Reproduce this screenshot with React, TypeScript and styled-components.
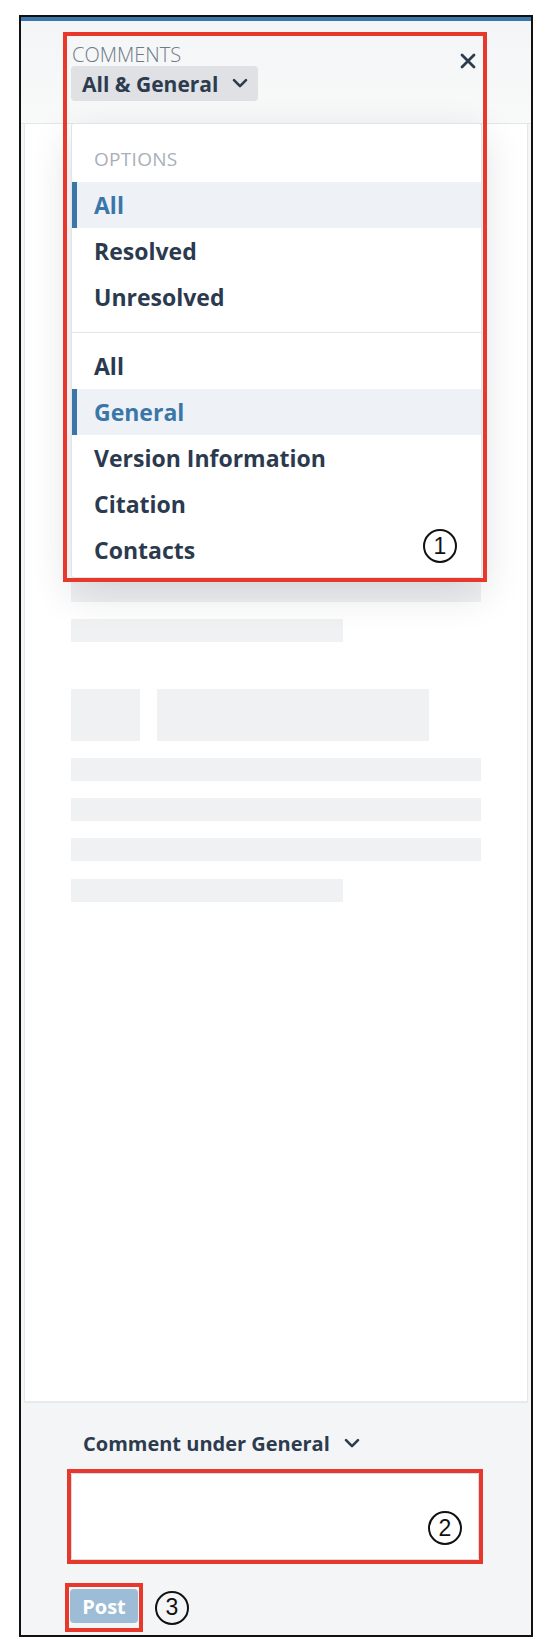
import styled, { createGlobalStyle } from "styled-components";

const GlobalStyle = createGlobalStyle`
  * {
    box-sizing: border-box;
  }

  body {
    margin: 0;
    background: #ffffff;
    font-family: "Open Sans", "Liberation Sans", sans-serif;
  }
`;

const STATUS_OPTIONS = [
  { label: "All", selected: true },
  { label: "Resolved", selected: false },
  { label: "Unresolved", selected: false },
];

const SECTION_OPTIONS = [
  { label: "All", selected: false },
  { label: "General", selected: true },
  { label: "Version Information", selected: false },
  { label: "Citation", selected: false },
  { label: "Contacts", selected: false },
];

const Chevron = ({ size = 16 }: { size?: number }) => (
  <svg width={size} height={size * 0.65} viewBox="0 0 16 10" fill="none">
    <polyline
      points="2,2 8,8 14,2"
      stroke="#2d3b4e"
      strokeWidth="2.6"
      strokeLinecap="round"
      strokeLinejoin="round"
    />
  </svg>
);

const CloseIcon = () => (
  <svg width="16" height="16" viewBox="0 0 16 16" fill="none">
    <path d="M2 2 L14 14 M14 2 L2 14" stroke="#2d3b4e" strokeWidth="2.8" strokeLinecap="round" />
  </svg>
);

const App = () => {
  return (
    <>
      <GlobalStyle />
      <S.Page>
        <S.Frame>
          <S.TopBar />
          <S.Header>
            <S.TitleBox>
              <S.Title>COMMENTS</S.Title>
              <S.FilterPill>
                All &amp; General
                <Chevron />
              </S.FilterPill>
            </S.TitleBox>
            <S.CloseButton aria-label="Close">
              <CloseIcon />
            </S.CloseButton>

            <S.Menu>
              <S.MenuGroup $top={22} $bottom={12}>
                <S.MenuLabel>OPTIONS</S.MenuLabel>
                {STATUS_OPTIONS.map((option) => (
                  <S.MenuItem key={option.label} $selected={option.selected}>
                    {option.label}
                  </S.MenuItem>
                ))}
              </S.MenuGroup>
              <S.Divider />
              <S.MenuGroup $top={10} $bottom={4}>
                {SECTION_OPTIONS.map((option) => (
                  <S.MenuItem key={option.label} $selected={option.selected}>
                    {option.label}
                  </S.MenuItem>
                ))}
              </S.MenuGroup>
            </S.Menu>
          </S.Header>

          <S.Body>
            <S.Content>
              <S.Skeleton>
                <S.Bar $short={false} />
                <S.Bar $short />
                <S.BlockRow>
                  <S.Avatar />
                  <S.Block />
                </S.BlockRow>
                <S.Bar $short={false} />
                <S.Bar $short={false} />
                <S.Bar $short={false} />
                <S.Bar $short />
              </S.Skeleton>
            </S.Content>
          </S.Body>

          <S.Footer>
            <S.SectionPicker>
              Comment under General
              <Chevron />
            </S.SectionPicker>
            <S.TextAreaMark>
              <S.TextArea />
              <S.Marker $right={17} $bottom={15}>2</S.Marker>
            </S.TextAreaMark>
            <S.PostRow>
              <S.ButtonMark>
                <S.PostButton disabled>Post</S.PostButton>
              </S.ButtonMark>
              <S.InlineMarker>3</S.InlineMarker>
            </S.PostRow>
          </S.Footer>

          <S.MenuMark>
            <S.Marker $right={26} $bottom={15}>1</S.Marker>
          </S.MenuMark>
        </S.Frame>
      </S.Page>
    </>
  );
};

const S = {
  Page: styled.div`
    padding: 15px 0 0 19px;
  `,

  Frame: styled.div`
    position: relative;
    display: flex;
    flex-direction: column;
    width: 514px;
    height: 1622px;
    border: 2px solid #111111;
    background: #f4f5f6;
  `,

  TopBar: styled.div`
    height: 4px;
    background: #3b77a8;
  `,

  Header: styled.div`
    position: relative;
    z-index: 2;
    display: flex;
    justify-content: space-between;
    align-items: flex-start;
    height: 103px;
    padding: 23px 55px 0 50px;
    background: linear-gradient(180deg, #f4f5f6 0%, #f8f9f9 100%);
    border-bottom: 1px solid #e4e6e8;
  `,

  TitleBox: styled.div`
    display: flex;
    flex-direction: column;
    align-items: flex-start;
  `,

  Title: styled.div`
    font-size: 20px;
    font-weight: 300;
    line-height: 22px;
    color: #6f7a87;
    padding-left: 1px;
  `,

  FilterPill: styled.div`
    display: flex;
    align-items: center;
    gap: 14px;
    height: 35px;
    padding: 0 10px 0 11px;
    border-radius: 4px;
    background: #dfe1e5;
    font-size: 21px;
    font-weight: 700;
    color: #2d3b4e;
  `,

  CloseButton: styled.button`
    display: flex;
    margin-top: 9px;
    padding: 0;
    border: none;
    background: none;
  `,

  Menu: styled.div`
    position: absolute;
    top: 102px;
    left: 50px;
    width: 411px;
    background: #ffffff;
    border: 1px solid #e1e3e6;
    border-radius: 3px;
    box-shadow: 0 14px 40px rgba(30, 40, 60, 0.16);
  `,

  MenuGroup: styled.div<{ $top: number; $bottom: number }>`
    padding: ${({ $top }) => $top}px 0 ${({ $bottom }) => $bottom}px;
  `,

  MenuLabel: styled.div`
    margin-bottom: 10px;
    padding-left: 22px;
    font-size: 19px;
    line-height: 26px;
    letter-spacing: 0.3px;
    color: #a9afb7;
  `,

  MenuItem: styled.div<{ $selected: boolean }>`
    display: flex;
    align-items: center;
    height: 46px;
    padding-left: 22px;
    font-size: 23px;
    font-weight: 700;
    color: ${({ $selected }) => ($selected ? "#3b76a9" : "#2b3a4e")};
    background: ${({ $selected }) => ($selected ? "#eef2f6" : "transparent")};
    box-shadow: ${({ $selected }) => ($selected ? "inset 5px 0 0 #3b76a9" : "none")};
  `,

  Divider: styled.div`
    height: 1px;
    background: #e4e6e9;
  `,

  Body: styled.div`
    display: flex;
    flex: 1;
    padding: 0 3px;
  `,

  Content: styled.div`
    flex: 1;
    padding: 455px 46px 0;
    background: #ffffff;
    border: 1px solid #e6e7e9;
    border-top: none;
    border-bottom: 2px solid #e8e9ea;
  `,

  Skeleton: styled.div`
    display: flex;
    flex-direction: column;
    gap: 17.3px;
  `,

  Bar: styled.div<{ $short: boolean }>`
    width: ${({ $short }) => ($short ? "272px" : "100%")};
    height: 23px;
    background: #f0f1f2;
  `,

  BlockRow: styled.div`
    display: flex;
    gap: 17px;
    margin: 29px 0 0;
  `,

  Avatar: styled.div`
    width: 69px;
    height: 52px;
    background: #f0f1f2;
  `,

  Block: styled.div`
    width: 272px;
    height: 52px;
    background: #f0f1f2;
  `,

  Footer: styled.div`
    display: flex;
    flex-direction: column;
    align-items: flex-start;
    height: 232px;
    padding: 27px 0 0 44px;
  `,

  SectionPicker: styled.div`
    display: flex;
    align-items: center;
    gap: 14px;
    margin-left: 18px;
    font-size: 20px;
    font-weight: 700;
    line-height: 27px;
    color: #2d3b4e;
  `,

  TextAreaMark: styled.div`
    position: relative;
    width: 416px;
    height: 95px;
    margin: 12px 0 0 2px;
    border: 4px solid #e8382c;
  `,

  TextArea: styled.textarea`
    display: block;
    width: 100%;
    height: 100%;
    border: 1px solid #d9dbde;
    border-radius: 2px;
    background: #ffffff;
    resize: none;
  `,

  PostRow: styled.div`
    display: flex;
    align-items: center;
    gap: 12px;
    margin-top: 19px;
  `,

  ButtonMark: styled.div`
    padding: 2px 1px 5px;
    border: 4px solid #e8382c;
  `,

  PostButton: styled.button`
    display: block;
    width: 68px;
    height: 34px;
    padding: 0;
    border: none;
    border-radius: 4px;
    background: #9dbcd6;
    font-family: "Open Sans", sans-serif;
    font-size: 20px;
    font-weight: 700;
    color: #ffffff;
  `,

  MenuMark: styled.div`
    position: absolute;
    z-index: 5;
    top: 15px;
    left: 42px;
    width: 424px;
    height: 550px;
    border: 4px solid #e8382c;
    pointer-events: none;
  `,

  Marker: styled.div<{ $right: number; $bottom: number }>`
    position: absolute;
    right: ${({ $right }) => $right}px;
    bottom: ${({ $bottom }) => $bottom}px;
    display: flex;
    align-items: center;
    justify-content: center;
    width: 34px;
    height: 34px;
    border: 2px solid #111111;
    border-radius: 50%;
    font-family: "Liberation Sans", sans-serif;
    font-size: 23px;
    color: #111111;
  `,

  InlineMarker: styled.div`
    display: flex;
    align-items: center;
    justify-content: center;
    width: 34px;
    height: 34px;
    border: 2px solid #111111;
    border-radius: 50%;
    font-family: "Liberation Sans", sans-serif;
    font-size: 23px;
    color: #111111;
  `,
};

export default App;
